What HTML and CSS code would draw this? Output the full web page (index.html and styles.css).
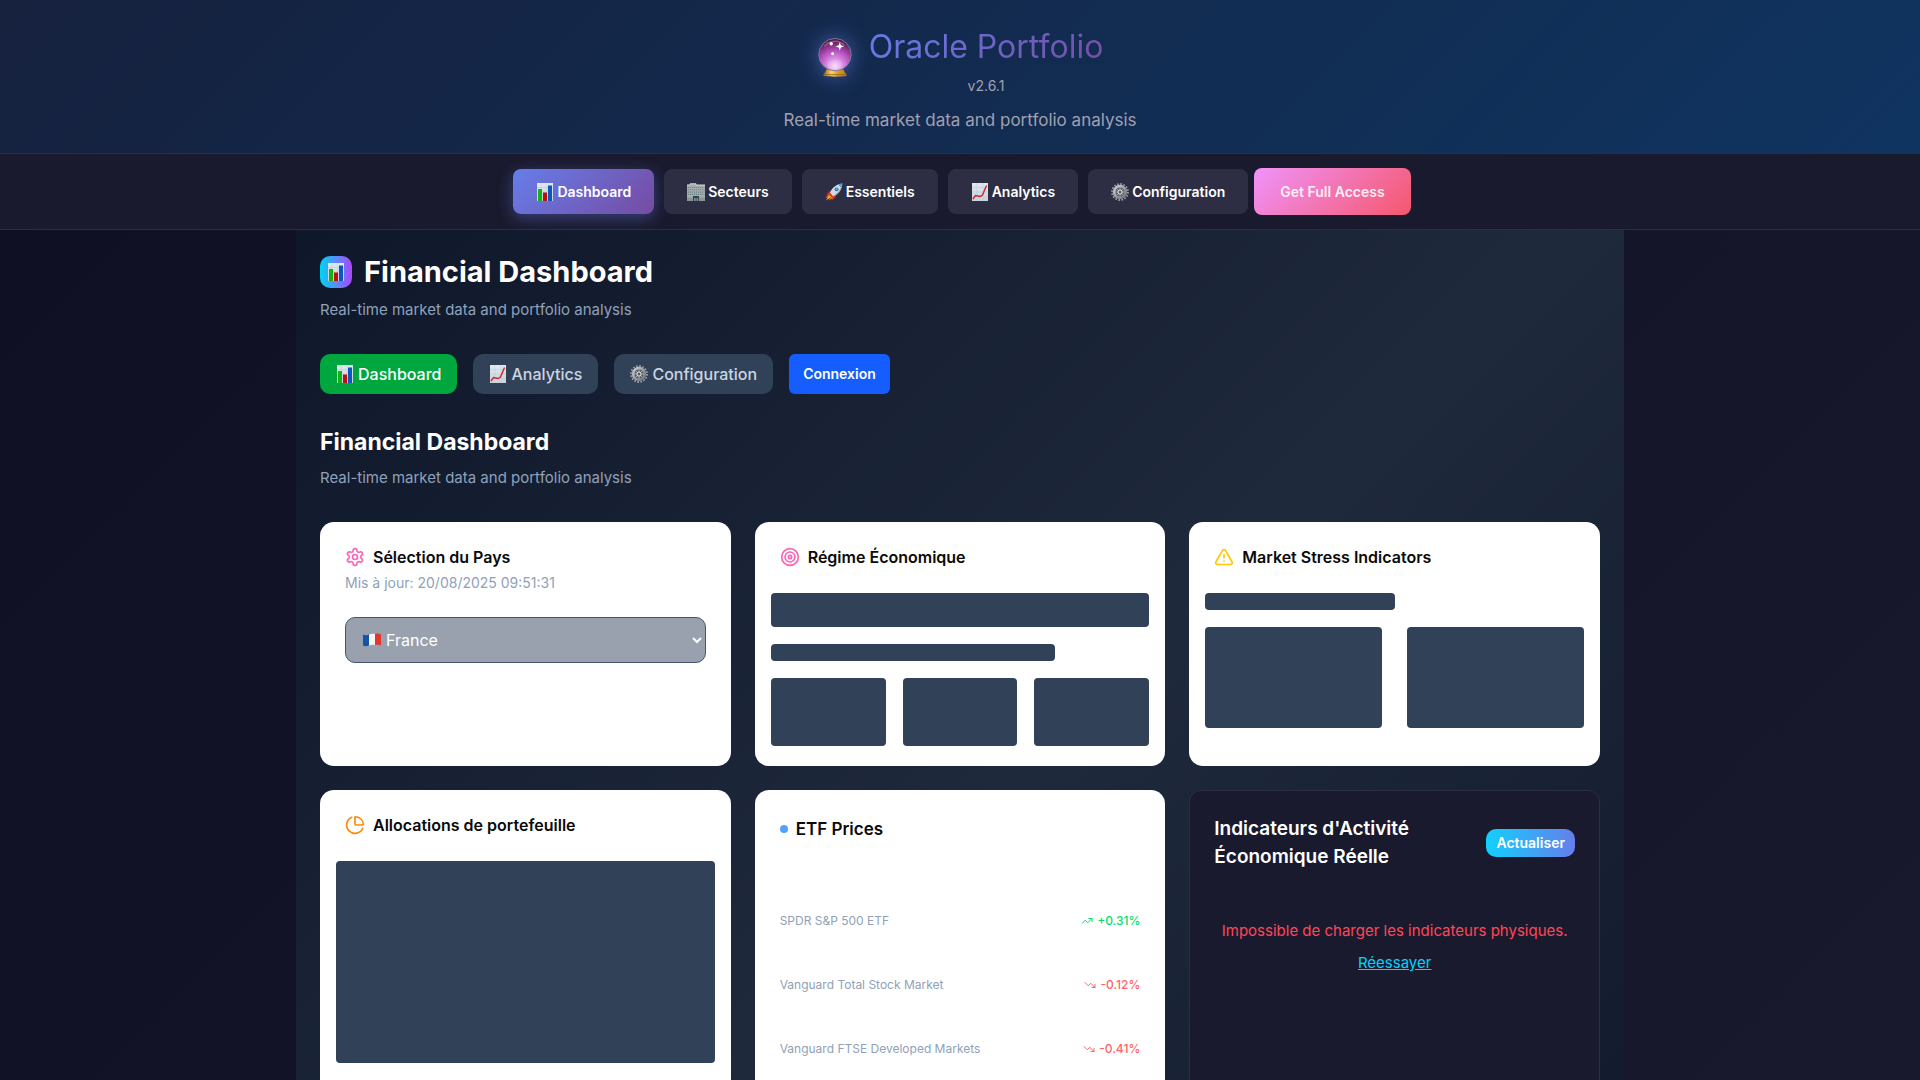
FILE: index.html
```html
<!DOCTYPE html>
<html lang="fr">
<head>
<meta charset="utf-8">
<meta name="viewport" content="width=device-width, initial-scale=1">
<title>Oracle Portfolio</title>
<link rel="stylesheet" href="styles.css">
</head>
<body>
<svg class="sprite" width="0" height="0" aria-hidden="true">
  <defs>
    <radialGradient id="ball" cx="50%" cy="86%" r="84%">
      <stop offset="0" stop-color="#fbd9fb"/><stop offset=".28" stop-color="#dc8fe6"/><stop offset=".6" stop-color="#b04cba"/><stop offset="1" stop-color="#4a1440"/>
    </radialGradient>
    <linearGradient id="gold" x1="0" x2="1" y1="0" y2="0">
      <stop offset="0" stop-color="#9a5a10"/><stop offset=".35" stop-color="#ffd75e"/><stop offset=".6" stop-color="#e0a02c"/><stop offset="1" stop-color="#b8761a"/>
    </linearGradient>
    <linearGradient id="paper" x1="0" x2="0" y1="0" y2="1">
      <stop offset="0" stop-color="#dfe9f0"/><stop offset="1" stop-color="#c9d2da"/>
    </linearGradient>
    <linearGradient id="steel" x1="0" x2="1" y1="0" y2="1">
      <stop offset="0" stop-color="#c9ced2"/><stop offset="1" stop-color="#6d7377"/>
    </linearGradient>
    <symbol id="e-bars" viewBox="0 0 18 18">
      <rect x="1" y="0" width="16" height="18" fill="url(#paper)"/>
      <path d="M1 4.500h16M1 9h16M1 13.500h16M5 0v18M11 0v18" stroke="#b5c3cf" stroke-width=".4"/>
      <rect x="2" y="6" width="4" height="12" fill="#12b312"/><rect x="7" y="9.500" width="4" height="8.500" fill="#c00d12"/><rect x="12" y="2.500" width="4" height="15.500" fill="#0b57bd"/>
    </symbol>
    <symbol id="e-trend" viewBox="0 0 18 18">
      <rect x="1" y="0" width="16" height="18" fill="url(#paper)"/>
      <path d="M1 4.500h16M1 9h16M1 13.500h16M6 0v18M12 0v18" stroke="#b9c6d1" stroke-width=".4"/>
      <path d="M2 16l2.500-3.500 4.500 1 2.500-1.500L15.500 2.500" fill="none" stroke="#d3222a" stroke-width="1.400"/>
    </symbol>
    <symbol id="e-building" viewBox="0 0 18 18">
      <path d="M0 2h3V.8h6V2h9v16H0z" fill="#a3adae"/>
      <path d="M0 2h3V.8h6V2h9" stroke="#d3d8d6" fill="none"/>
      <path d="M.8 4.500h16.500M.8 6.800h16.500M.8 9.100h16.500M.8 11.400h16.500" stroke="#72848a" stroke-width="1.100" stroke-dasharray="1.200 .8"/>
      <path d="M0 14.500h6V18H0zM12 14.500h6V18h-6z" fill="#8b9596"/><path d="M6 13h6v5H6z" fill="#35424a"/><path d="M7 15h1.700v3H7zM9.500 15h1.700v3H9.500z" fill="#76909e"/>
    </symbol>
    <symbol id="e-rocket" viewBox="0 0 18 18">
      <path d="M5 11l-4.500 1.500L4 8.500 8 7zM8 13l-1.500 5 4-3.500.5-4z" fill="#c92d1e"/>
      <path d="M4.500 12L1 17.300 6.500 14z" fill="#ffbf1f"/><path d="M4.500 10.500L.5 15l4-1z" fill="#ff7a16"/><path d="M7 13l-3.500 4.500L8 15z" fill="#ff7a16"/>
      <path d="M4.500 11.500C6 6 10 1.500 17.300.5 17 7.500 12.500 12 7 14z" fill="#d3dbe0"/>
      <path d="M6.500 14C12.500 11 16 7 17.300.500 17 8 12.500 12.500 7 14z" fill="#8596a2"/>
      <path d="M13 1.600L17.300.5l-.9 4.600z" fill="#4f9fdb"/><circle cx="11.600" cy="6.300" r="1.900" fill="#1c5f9c"/><circle cx="11.600" cy="6.300" r="1" fill="#76c2f0"/>
      <path d="M4.500 10.500l3.200 3.600" stroke="#c92d1e" stroke-width="1.500"/>
    </symbol>
    <symbol id="e-gear" viewBox="0 0 18 18">
      <circle cx="9" cy="9" r="8" fill="none" stroke="#9ba1a5" stroke-width="1.800" stroke-dasharray="1.600 1.542"/>
      <circle cx="9" cy="9" r="5.700" fill="none" stroke="url(#steel)" stroke-width="3"/>
      <circle cx="9" cy="9" r="4.500" fill="#565c60"/>
      <path d="M9 4v10M4 9h10M5.500 5.500l7 7M12.500 5.500l-7 7" stroke="#a5abaf"/>
      <circle cx="9" cy="9" r="2.500" fill="#d9dde0"/><circle cx="9" cy="9" r="1.500" fill="#555c61"/>
    </symbol>
    <symbol id="e-ball" viewBox="0 0 36 42">
      <path d="M9 33h18c.5 3 3 4 3.500 6.500 0 1.500-25 1.500-25 0C6 37 8.500 36 9 33z" fill="url(#gold)"/>
      <path d="M6.500 38.500h23" stroke="#8c5412" stroke-width=".8"/>
      <circle cx="18" cy="17.500" r="17" fill="url(#ball)" stroke="#77808c" stroke-width="1"/>
      <ellipse cx="18" cy="28" rx="8" ry="5" fill="#fff" opacity=".15"/>
      <path d="M7 9c3-5 14-9 21-1" fill="none" stroke="#c683c0" stroke-width="1.500" opacity=".5"/>
      <circle cx="14" cy="6" r="1.800" fill="#fff"/><circle cx="15.500" cy="16.500" r="1.500" fill="#fff"/>
      <path d="M23 4.500l1.200 3.200 3.300 1.100-3.300 1.200L23 13.200 21.800 10l-3.300-1.200 3.300-1.100z" fill="#fff"/>
    </symbol>
    <symbol id="e-flag" viewBox="0 0 18 14">
      <path d="M0 1.500C2 2.500 4 2.500 6 1.500v11c-2 1-4 1-6 0z" fill="#1356a8"/>
      <path d="M6 1.500C8 .7 10 .6 12 1v11c-2-.3-4-.2-6 .5z" fill="#f4f5f7"/>
      <path d="M12 1c2-.6 4-.6 6 .5v11c-2-1-4-1-6-.5z" fill="#e0372f"/>
    </symbol>
    <symbol id="i-up" viewBox="0 0 24 24"><path d="M16 7h6v6M22 7l-8.500 8.500-5-5L2 17"/></symbol>
    <symbol id="i-down" viewBox="0 0 24 24"><path d="M16 17h6v-6M22 17l-8.500-8.500-5 5L2 7"/></symbol>
  </defs>
</svg>

<header class="site-header">
  <div class="brand">
    <svg class="brand-logo" aria-hidden="true"><use href="#e-ball"/></svg>
    <div class="brand-text">
      <p class="brand-name">Oracle Portfolio</p>
      <span class="version">v2.6.1</span>
    </div>
  </div>
  <p class="tagline">Real-time market data and portfolio analysis</p>
</header>

<nav class="site-nav">
  <button class="nav-btn active" type="button"><svg class="emoji"><use href="#e-bars"/></svg>Dashboard</button>
  <button class="nav-btn" type="button"><svg class="emoji"><use href="#e-building"/></svg>Secteurs</button>
  <button class="nav-btn" type="button"><svg class="emoji"><use href="#e-rocket"/></svg>Essentiels</button>
  <button class="nav-btn" type="button"><svg class="emoji"><use href="#e-trend"/></svg>Analytics</button>
  <button class="nav-btn" type="button"><svg class="emoji"><use href="#e-gear"/></svg>Configuration</button>
  <button class="nav-cta" type="button">Get Full Access</button>
</nav>

<main class="page">
  <h1 class="page-title"><span class="title-badge"><svg class="emoji"><use href="#e-bars"/></svg></span>Financial Dashboard</h1>
  <p class="subtitle">Real-time market data and portfolio analysis</p>

  <div class="tabs">
    <a class="tab tab-active" href="#dashboard"><svg class="emoji"><use href="#e-bars"/></svg>Dashboard</a>
    <a class="tab" href="#analytics"><svg class="emoji"><use href="#e-trend"/></svg>Analytics</a>
    <a class="tab" href="#configuration"><svg class="emoji"><use href="#e-gear"/></svg>Configuration</a>
    <button class="login" type="button">Connexion</button>
  </div>

  <h2 class="section-title">Financial Dashboard</h2>
  <p class="subtitle">Real-time market data and portfolio analysis</p>

  <div class="cards">
    <section class="card">
      <h3 class="card-title">
        <svg class="icon pink" viewBox="0 0 24 24"><path d="M12.220 2h-.440a2 2 0 0 0-2 2v.180a2 2 0 0 1-1 1.730l-.430.250a2 2 0 0 1-2 0l-.150-.080a2 2 0 0 0-2.730.730l-.220.380a2 2 0 0 0 .730 2.730l.150.100a2 2 0 0 1 1 1.720v.510a2 2 0 0 1-1 1.740l-.150.090a2 2 0 0 0-.730 2.730l.220.380a2 2 0 0 0 2.730.730l.150-.080a2 2 0 0 1 2 0l.430.250a2 2 0 0 1 1 1.730V20a2 2 0 0 0 2 2h.440a2 2 0 0 0 2-2v-.180a2 2 0 0 1 1-1.730l.430-.250a2 2 0 0 1 2 0l.150.080a2 2 0 0 0 2.730-.730l.220-.390a2 2 0 0 0-.730-2.730l-.150-.080a2 2 0 0 1-1-1.740v-.500a2 2 0 0 1 1-1.740l.150-.090a2 2 0 0 0 .730-2.730l-.220-.380a2 2 0 0 0-2.730-.730l-.150.080a2 2 0 0 1-2 0l-.430-.250a2 2 0 0 1-1-1.730V4a2 2 0 0 0-2-2z"/><circle cx="12" cy="12" r="3"/></svg>
        <label for="country">Sélection du Pays</label>
      </h3>
      <p class="updated">Mis à jour: 20/08/2025 09:51:31</p>
      <div class="select-wrap">
        <select id="country" class="country"><option>France</option></select>
        <svg class="flag" aria-hidden="true"><use href="#e-flag"/></svg>
      </div>
    </section>

    <section class="card">
      <h3 class="card-title">
        <svg class="icon pink" viewBox="0 0 24 24"><circle cx="12" cy="12" r="10"/><circle cx="12" cy="12" r="6"/><circle cx="12" cy="12" r="2"/></svg>
        Régime Économique
      </h3>
      <div class="skeletons">
        <div class="bone bone-row"></div>
        <div class="bone bone-line three-quarters"></div>
        <div class="trio"><div class="bone bone-tile"></div><div class="bone bone-tile"></div><div class="bone bone-tile"></div></div>
      </div>
    </section>

    <section class="card">
      <h3 class="card-title">
        <svg class="icon yellow" viewBox="0 0 24 24"><path d="M21.730 18l-8-14a2 2 0 0 0-3.480 0l-8 14A2 2 0 0 0 4 21h16a2 2 0 0 0 1.730-3M12 9v4M12 17h.010"/></svg>
        Market Stress Indicators
      </h3>
      <div class="skeletons">
        <div class="bone bone-line half"></div>
        <div class="duo"><div class="bone bone-panel"></div><div class="bone bone-panel"></div></div>
      </div>
    </section>

    <section class="card card-tall">
      <h3 class="card-title">
        <svg class="icon orange" viewBox="0 0 24 24"><path d="M21 12c.550 0 1-.450.950-1a10 10 0 0 0-8.950-8.950c-.550-.050-1 .400-1 .950v8a1 1 0 0 0 1 1zM21.210 15.890A10 10 0 1 1 8 2.830"/></svg>
        Allocations de portefeuille
      </h3>
      <div class="skeletons"><div class="bone bone-chart"></div></div>
    </section>

    <section class="card card-tall">
      <h3 class="etf-title"><span class="dot"></span>ETF Prices</h3>
      <ul class="etfs">
        <li class="etf"><span>SPDR S&amp;P 500 ETF</span><span class="change up"><svg class="arrow"><use href="#i-up"/></svg>+0.31%</span></li>
        <li class="etf"><span>Vanguard Total Stock Market</span><span class="change down"><svg class="arrow"><use href="#i-down"/></svg>-0.12%</span></li>
        <li class="etf"><span>Vanguard FTSE Developed Markets</span><span class="change down"><svg class="arrow"><use href="#i-down"/></svg>-0.41%</span></li>
      </ul>
    </section>

    <section class="card card-tall card-dark">
      <div class="dark-head">
        <h3 class="dark-title">Indicateurs d'Activité Économique Réelle</h3>
        <button class="refresh" type="button">Actualiser</button>
      </div>
      <div class="failure">
        <p class="error">Impossible de charger les indicateurs physiques.</p>
        <a class="retry" href="#retry">Réessayer</a>
      </div>
    </section>
  </div>
</main>
</body>
</html>
```

FILE: styles.css
```css
* { box-sizing: border-box; margin: 0; padding: 0; }

body {
  min-height: 100vh;
  font-family: Inter, "Liberation Sans", sans-serif;
  font-size: 16px;
  line-height: 24px;
  color: #fff;
  background: linear-gradient(135deg, #0f0f23 0%, #1a1a2e 100%);
}

button, select { font: inherit; border: 0; }
a { color: inherit; text-decoration: none; }
ul { list-style: none; }
.sprite { position: absolute; }
.emoji { width: 18px; height: 18px; flex: none; }

/* Header */
.site-header {
  display: flex;
  flex-direction: column;
  align-items: center;
  gap: 10px;
  padding: 24px 24px 21px;
  background: linear-gradient(135deg, #16213e 0%, #0f3460 100%);
  border-bottom: 1px solid #2d2d44;
}
.brand { display: flex; align-items: flex-start; gap: 16px; }
.brand-logo {
  width: 36px;
  height: 40px;
  margin-top: 14px;
  filter: drop-shadow(0 0 10px rgba(102, 126, 234, .6));
}
.brand-text { text-align: center; }
.brand-name {
  font-size: 32px;
  line-height: 46px;
  color: transparent;
  background: linear-gradient(135deg, #667eea 0%, #764ba2 100%);
  background-clip: text;
}
.version { display: block; font-size: 14px; line-height: 32px; height: 28px; color: #a0a0b0; }
.tagline { font-size: 17px; line-height: 24px; color: #a0a0b0; }

/* Main navigation */
.site-nav {
  display: flex;
  justify-content: center;
  gap: 10px;
  padding: 15px 24px;
  background: #1a1a2e;
  border-bottom: 1px solid #2d2d44;
}
.nav-btn, .nav-cta {
  display: flex;
  align-items: center;
  gap: 3px;
  height: 45px;
  padding: 0 23px;
  font-size: 14px;
  font-weight: 600;
  color: #fff;
  background: #2d2d44;
  border-radius: 8px;
}
.nav-btn.active {
  background: linear-gradient(135deg, #667eea 0%, #764ba2 100%);
  box-shadow: 0 4px 15px rgba(102, 126, 234, .4);
}
.nav-cta {
  height: 47px;
  margin: -1px -4px;
  padding: 0 26px;
  color: #ffeef5;
  background: linear-gradient(135deg, #f093fb 0%, #f5576c 100%);
}

/* Page */
.page {
  max-width: 1328px;
  min-height: 1220px;
  margin: 0 auto;
  padding: 24px;
  background: linear-gradient(135deg, #0f172a 0%, #1e293b 50%, #0f172a 100%);
}
.page-title { display: flex; align-items: center; gap: 12px; font-size: 29px; line-height: 36px; font-weight: 700; }
.title-badge {
  display: grid;
  place-items: center;
  width: 32px;
  height: 32px;
  border-radius: 10px;
  background: linear-gradient(90deg, #00d3f2, #ad46ff);
}
.title-badge .emoji { height: 22px; }
.subtitle { margin-top: 8px; font-size: 15px; color: #90a1b9; }
.tabs { display: flex; flex-wrap: wrap; gap: 16px; margin: 32px 0; }
.tab {
  display: flex;
  align-items: center;
  gap: 4px;
  height: 40px;
  padding: 0 16px;
  font-weight: 500;
  color: #cad5e2;
  background: #314158;
  border-radius: 10px;
}
.tab .emoji { height: 20px; }
.tab-active { color: #fff; background: #00a63e; }
.login { height: 40px; padding: 0 14px; font-size: 14px; font-weight: 600; color: #fff; background: #155dfc; border-radius: 6px; }
.section-title { font-size: 23px; line-height: 32px; font-weight: 700; }

/* Cards */
.cards { display: grid; grid-template-columns: repeat(3, 1fr); gap: 24px; margin-top: 32px; }
.card {
  min-height: 244px;
  padding: 25px 25px 20px;
  color: #0a0a0a;
  background: #fff;
  border-radius: 14px;
}
.card-tall { min-height: 400px; }
.card-title { display: flex; align-items: center; gap: 8px; font-size: 16px; line-height: 20px; font-weight: 600; }
.icon { width: 20px; height: 20px; fill: none; stroke: currentColor; stroke-width: 2; stroke-linecap: round; stroke-linejoin: round; }
.pink { color: #fb64b6; }
.yellow { color: #fdc700; }
.orange { color: #ff8904; }
.updated { margin-top: 6px; font-size: 14px; line-height: 20px; color: #90a1b9; }

.select-wrap { position: relative; margin-top: 24px; }
.country {
  width: 100%;
  height: 46px;
  padding: 0 16px 0 36px;
  color: #fff;
  background: #99a1af;
  border: 1px solid #45556c;
  border-radius: 10px;
}
.country option { color: #fff; background: #314158; }
.flag { position: absolute; left: 18px; top: 16px; width: 18px; height: 14px; pointer-events: none; }

/* Loading placeholders */
.skeletons { display: grid; gap: 17px; margin: 26px -9px 0; }
.bone { background: #314158; border-radius: 4px; }
.bone-row { height: 34px; }
.bone-line { height: 17px; }
.bone-tile { height: 68px; }
.bone-panel { height: 101px; }
.bone-chart { height: 202px; }
.three-quarters { width: 75%; }
.half { width: 50%; }
.trio { display: grid; grid-template-columns: repeat(3, 1fr); gap: 17px; }
.duo { display: grid; grid-template-columns: repeat(2, 1fr); gap: 25px; }

/* ETF prices */
.etf-title { display: flex; align-items: center; gap: 8px; font-size: 17px; line-height: 28px; font-weight: 600; }
.dot { width: 8px; height: 8px; border-radius: 50%; background: #51a2ff; }
.etfs { display: grid; gap: 48px; margin-top: 70px; font-size: 12px; line-height: 16px; color: #90a1b9; }
.etf { display: flex; justify-content: space-between; }
.change { display: flex; align-items: center; gap: 4px; font-weight: 500; }
.arrow { width: 12px; height: 12px; fill: none; stroke: currentColor; stroke-width: 2; stroke-linecap: round; stroke-linejoin: round; }
.up { color: #05df72; }
.down { color: #ff6467; }

/* Activity indicators */
.card-dark { padding: 24px; color: #fff; background: #1a1a2e; border: 1px solid #2d2d44; border-radius: 12px; }
.dark-head { display: flex; align-items: center; justify-content: space-between; gap: 16px; }
.dark-title { max-width: 220px; font-size: 19px; line-height: 28px; font-weight: 600; }
.refresh { height: 28px; padding: 0 10px; font-size: 14px; font-weight: 600; color: #fff; background: linear-gradient(90deg, #12d0ff, #667eea); border-radius: 10px; }
.failure { display: flex; flex-direction: column; align-items: center; gap: 8px; margin-top: 48px; font-size: 15px; }
.error { color: #ff4757; }
.retry { color: #00d4ff; text-decoration: underline; }
```
